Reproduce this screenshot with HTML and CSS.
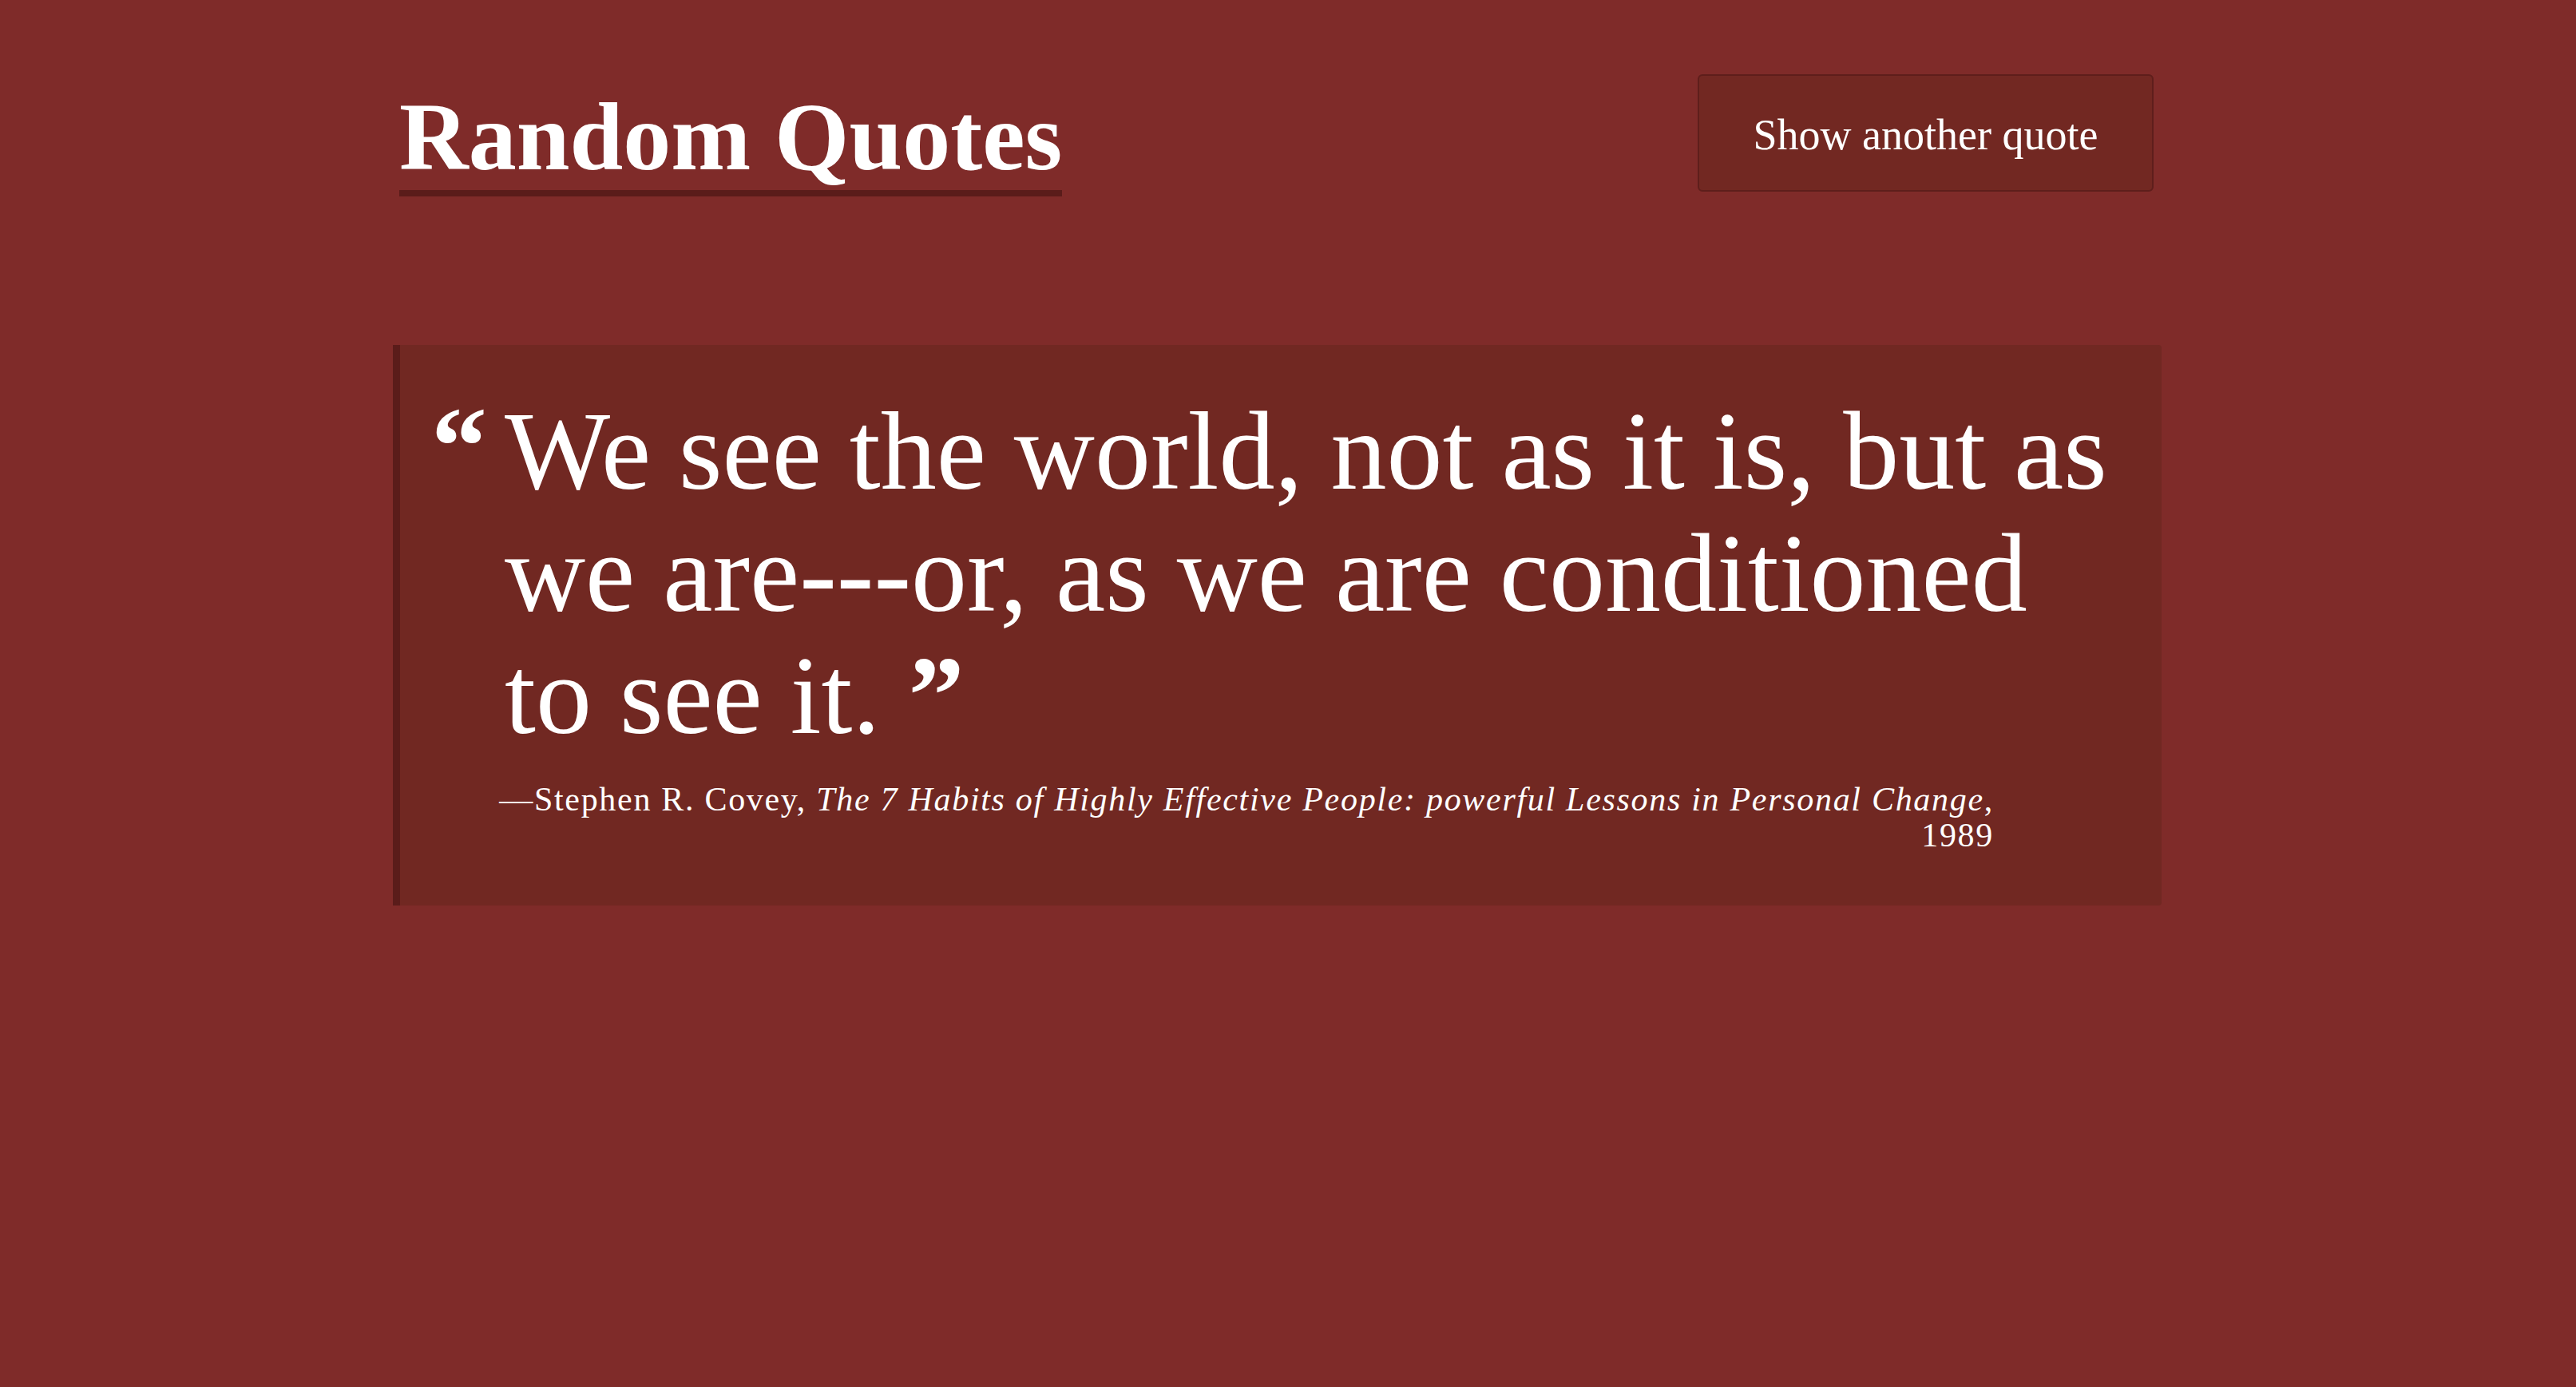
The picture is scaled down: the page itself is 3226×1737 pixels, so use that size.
FILE: index.html
```html
<!DOCTYPE html>
<html lang="en">
<head>
<meta charset="utf-8">
<title>Random Quotes</title>
<link rel="stylesheet" href="styles.css">
</head>
<body>
<main class="page">
  <header class="header">
    <h1 class="title">Random Quotes</h1>
    <button class="next-btn" type="button">Show another quote</button>
  </header>
  <blockquote class="quote">
    <div class="quote-body">
      <span class="mark mark-open">“</span>
      <p class="quote-text">We see the world, not as it is, but as we are---or, as we are conditioned to see it. <span class="mark mark-close">”</span></p>
    </div>
    <footer class="attribution">—Stephen R. Covey, <cite class="work">The 7 Habits of Highly Effective People: powerful Lessons in Personal Change</cite>, 1989</footer>
  </blockquote>
</main>
</body>
</html>
```
FILE: styles.css
```css
html {
  background: #7f2b29;
}
body {
  margin: 0;
  padding: 0 27px 0 0;
  background: #7f2b29;
  color: #ffffff;
  font-family: "Liberation Serif", "Times New Roman", serif;
}
.page {
  width: 2215px;
  margin: 0 auto;
}
.header {
  display: flex;
  justify-content: space-between;
  align-items: flex-start;
  padding: 93px 10px 0 8px;
  margin-bottom: 186px;
}
.title {
  margin: 13px 0 0 0;
  font-size: 120px;
  font-weight: 700;
  line-height: 132px;
  border-bottom: 8px solid #5a1c1a;
}
.next-btn {
  font-family: "Liberation Serif", "Times New Roman", serif;
  font-size: 54px;
  line-height: 1.2;
  color: #ffffff;
  background: #722822;
  border: 2px solid #5e1e1b;
  border-radius: 6px;
  padding: 42px 67px 36px;
  width: 571px;
  text-align: center;
}
.quote {
  margin: 0;
  background: #712822;
  border-left: 9px solid #5a1c1a;
  border-radius: 0 4px 4px 0;
  padding: 56px 30px 65px 39px;
}
.quote-body {
  display: flex;
  align-items: flex-start;
}
.mark {
  font-weight: 700;
  line-height: 1;
}
.mark-open {
  flex: 0 0 92px;
  font-size: 140px;
  padding-top: 1px;
}
.quote-text {
  margin: 0;
  flex: 1;
  font-size: 140px;
  line-height: 153px;
}
.attribution {
  margin: 32px 180px 0 79px;
  font-size: 42px;
  line-height: 45px;
  letter-spacing: 1.7px;
  text-align: right;
}
.work {
  font-style: italic;
}
```
